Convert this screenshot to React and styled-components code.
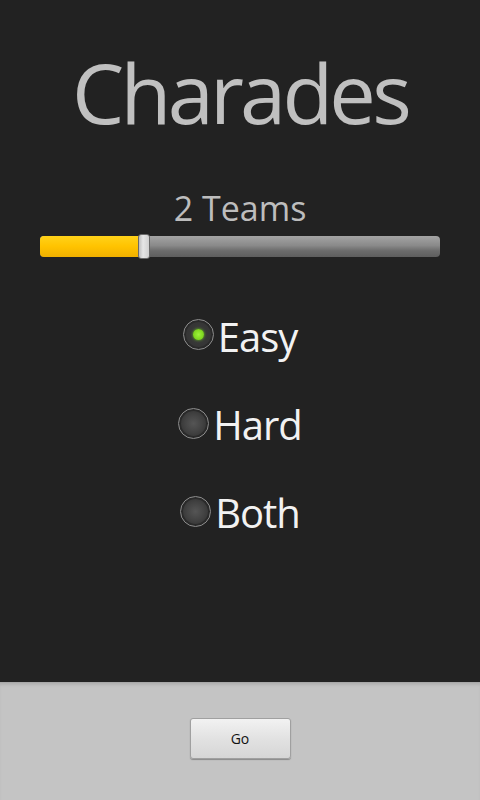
import { useState } from "react";
import styled, { createGlobalStyle } from "styled-components";

const GlobalStyle = createGlobalStyle`
  html, body {
    margin: 0;
    padding: 0;
    background: #222222;
  }
  body {
    font-family: "Open Sans", "DejaVu Sans", sans-serif;
  }
`;

const levels = ["Easy", "Hard", "Both"];

function App() {
  const [level, setLevel] = useState("Easy");
  const teams = 2;
  const percent = 26;

  return (
    <Screen>
      <GlobalStyle />
      <Main>
        <Title>Charades</Title>
        <TeamsLabel>{teams} Teams</TeamsLabel>
        <Track>
          <Fill style={{ width: `${percent}%` }} />
          <Thumb />
        </Track>
        <RadioGroup>
          {levels.map((name) => (
            <RadioRow key={name} onClick={() => setLevel(name)}>
              <RadioCircle $checked={level === name}>
                {level === name && <RadioDot />}
              </RadioCircle>
              <RadioText>{name}</RadioText>
            </RadioRow>
          ))}
        </RadioGroup>
      </Main>
      <BottomBar>
        <GoButton>Go</GoButton>
      </BottomBar>
    </Screen>
  );
}

const Screen = styled.div`
  display: flex;
  flex-direction: column;
  height: 100vh;
  width: 100%;
  overflow: hidden;
`;

const Main = styled.div`
  flex: 1;
  display: flex;
  flex-direction: column;
  align-items: center;
  background: #222222;
  padding: 0 40px;
`;

const Title = styled.h1`
  margin: 50px 0 0 0;
  font-size: 83px;
  line-height: 83px;
  font-weight: 400;
  color: #c0c0c0;
  letter-spacing: -3.8px;
`;

const TeamsLabel = styled.div`
  margin-top: 58px;
  font-size: 34px;
  line-height: 34px;
  color: #bdbdbd;
`;

const Track = styled.div`
  position: relative;
  align-self: stretch;
  margin-top: 11px;
  height: 21px;
  border-radius: 4px;
  background: linear-gradient(#a4a4a4, #8a8a8a 45%, #6c6c6c 70%, #5e5e5e);
`;

const Fill = styled.div`
  height: 100%;
  border-radius: 4px 0 0 4px;
  background: linear-gradient(#ffd21a, #ffc300 50%, #f0b000);
`;

const Thumb = styled.div`
  position: absolute;
  left: 98px;
  top: -2px;
  width: 12px;
  height: 25px;
  box-sizing: border-box;
  border: 1px solid #6a6a6a;
  border-radius: 3px;
  background: linear-gradient(90deg, #bdbdbd, #e6e6e6 40%, #d0d0d0);
`;

const RadioGroup = styled.div`
  display: flex;
  flex-direction: column;
  align-items: center;
  margin-top: 60px;
  gap: 48px;
`;

const RadioRow = styled.div`
  display: flex;
  align-items: center;
  gap: 4px;
  cursor: pointer;
`;

const RadioCircle = styled.div`
  width: 31px;
  height: 31px;
  box-sizing: border-box;
  border-radius: 50%;
  border: 1px solid #8c8c8c;
  display: flex;
  align-items: center;
  justify-content: center;
  margin-top: ${(p) => (p.$checked ? "-5px" : "-3px")};
  background: ${(p) =>
    p.$checked
      ? "radial-gradient(circle, #3c3c3c 0%, #353535 60%, #2c2c2c 100%)"
      : "radial-gradient(circle, #555 0%, #444 40%, #383838 65%, #2c2c2c 100%)"};
  box-shadow: inset 0 0 0 2px #2a2a2a;
`;

const RadioDot = styled.div`
  width: 11px;
  height: 11px;
  border-radius: 50%;
  background: radial-gradient(circle, #9ef23a 0%, #7ad31c 70%, #5aa010 100%);
  box-shadow: 0 0 3px #6fcf20;
`;

const RadioText = styled.span`
  font-size: 40px;
  line-height: 40px;
  color: #f2f2f2;
  letter-spacing: -1px;
`;

const BottomBar = styled.div`
  height: 118px;
  flex-shrink: 0;
  display: flex;
  align-items: center;
  justify-content: center;
  background: #c4c4c4;
  border-top: 1px solid #a8a8a8;
  box-shadow: inset 0 3px 3px -1px #b0b0b0;
  box-sizing: border-box;
  padding-bottom: 6px;
`;

const GoButton = styled.button`
  width: 101px;
  height: 41px;
  border: 1px solid #a0a0a0;
  border-radius: 3px;
  background: linear-gradient(#f2f2f2, #e2e2e2 50%, #d6d6d6);
  box-shadow: 0 1px 1px #8a8a8a;
  font-family: "Open Sans", "DejaVu Sans", sans-serif;
  font-size: 14px;
  color: #111;
  cursor: pointer;
`;

export default App;
